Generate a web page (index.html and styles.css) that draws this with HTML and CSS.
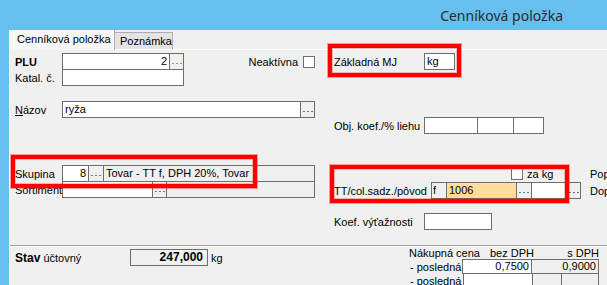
FILE: index.html
```html
<!DOCTYPE html>
<html lang="sk">
<head>
    <meta charset="UTF-8">
    <title>Cenníková položka</title>
    <link rel="stylesheet" href="styles.css">
</head>
<body>

    <div class="titlebar">Cenníková položka</div>

    <div class="client">
        <div class="tabs">
            <div class="tab active">Cenníková položka</div>
            <div class="tab">Poznámka</div>
            <div class="tab-fill"></div>
        </div>

        <div class="page">
            <div class="upper">
                <!-- left column -->
                <div class="col-left">
                    <div class="row row-plu">
                        <span class="lbl bold">PLU</span>
                        <div class="box w-plu">
                            <span class="cell val num">2</span>
                            <span class="cell btn orange"></span>
                        </div>
                        <span class="check-label">Neaktívna</span>
                        <span class="checkbox"></span>
                    </div>
                    <div class="row row-katal">
                        <span class="lbl">Katal. č.</span>
                        <div class="box w-plu"><span class="cell val"></span></div>
                    </div>
                    <div class="row row-nazov">
                        <span class="lbl"><u>N</u>ázov</span>
                        <div class="box w-long">
                            <span class="cell val">ryža</span>
                            <span class="cell btn"></span>
                        </div>
                    </div>
                    <div class="row row-skupina">
                        <span class="lbl">Skupina</span>
                        <div class="box w-long">
                            <span class="cell val num w-grp">8</span>
                            <span class="cell btn w-btn15"></span>
                            <span class="cell val ro">Tovar - TT f, DPH 20%, Tovar</span>
                        </div>
                    </div>
                    <div class="row row-sortiment">
                        <span class="lbl">Sortiment</span>
                        <div class="box w-long">
                            <span class="cell val w-sort"></span>
                            <span class="cell btn"></span>
                            <span class="cell val ro"></span>
                        </div>
                    </div>
                </div>

                <!-- right column -->
                <div class="col-right">
                    <div class="row row-mj">
                        <span class="lbl-r">Základná MJ</span>
                        <div class="box w-mj"><span class="cell val">kg</span></div>
                    </div>
                    <div class="row row-obj">
                        <span class="lbl-r">Obj. koef./% liehu</span>
                        <div class="box">
                            <span class="cell val w-obj1"></span>
                            <span class="cell val w-obj2"></span>
                            <span class="cell val w-obj3"></span>
                        </div>
                    </div>
                    <div class="row row-zakg">
                        <span class="checkbox"></span>
                        <span class="zakg">za kg</span>
                        <span class="cut">Pop</span>
                    </div>
                    <div class="row row-tt">
                        <span class="lbl-r w-tt">TT/col.sadz./pôvod</span>
                        <div class="box">
                            <span class="cell val ro w-f">f</span>
                            <span class="cell val hl w-code">1006</span>
                            <span class="cell btn dark w-btn15"></span>
                            <span class="cell val w-orig"></span>
                            <span class="cell btn dark"></span>
                        </div>
                        <span class="cut">Dop</span>
                    </div>
                    <div class="row row-koef">
                        <span class="lbl-r">Koef. výťažnosti</span>
                        <div class="box w-koef"><span class="cell val"></span></div>
                    </div>
                </div>
            </div>

            <div class="lower">
                <div class="stav-col">
                    <div class="row row-stav">
                        <span class="lbl-stav"><b class="big">Stav</b> účtovný</span>
                        <div class="box ro w-stav"><span class="cell val num big bold">247,000</span></div>
                        <span class="unit">kg</span>
                    </div>
                </div>
                <div class="price-col">
                    <div class="price-head">
                        <span class="ph-name">Nákupná cena</span>
                        <span class="ph-bez">bez DPH</span>
                        <span class="ph-s">s DPH</span>
                    </div>
                    <div class="price-row">
                        <span class="lbl-price">- posledná</span>
                        <div class="box short">
                            <span class="cell val num w-p1">0,7500</span>
                            <span class="cell val num ro w-p2">0,9000</span>
                        </div>
                    </div>
                    <div class="price-row second">
                        <span class="lbl-price">- posledná</span>
                        <div class="box short">
                            <span class="cell val w-p1"></span>
                            <span class="cell val ro w-p3"></span>
                            <span class="cell val ro w-p4"></span>
                        </div>
                    </div>
                </div>
            </div>
        </div>
    </div>

    <!-- red highlight frames -->
    <div class="mark mark-mj"></div>
    <div class="mark mark-grp"></div>
    <div class="mark mark-tt"></div>

</body>
</html>
```

FILE: styles.css
```css
* {
    box-sizing: border-box;
}
body {
    margin: 0;
    width: 607px;
    height: 285px;
    overflow: hidden;
    position: relative;
    background-color: #66bfef;
    font-family: "Liberation Sans", Arial, sans-serif;
    font-size: 11px;
    color: #000;
}
.bold {
    font-weight: bold;
}
.big {
    font-size: 12px;
}
.titlebar {
    height: 30px;
    display: flex;
    align-items: center;
    justify-content: flex-end;
    padding-right: 44px;
    font-family: "Noto Sans", sans-serif;
    font-size: 14px;
    color: #2b2b2b;
}
.client {
    margin-left: 9px;
    height: 255px;
    background-color: #f0f0f0;
    border-left: 1px solid #fafafa;
}

/* tabs */
.tabs {
    display: flex;
    align-items: flex-end;
    height: 20px;
}
.tab {
    height: 18px;
    line-height: 17px;
    padding-left: 5px;
    width: 58px;
    background-color: #e3e3e3;
    border: 1px solid #adadad;
    border-left: none;
    border-bottom-color: #fff;
}
.tab.active {
    height: 20px;
    line-height: 19px;
    width: 105px;
    padding-left: 7px;
    background-color: #f7f7f7;
    border: none;
    border-right: 1px solid #adadad;
}
.tab-fill {
    flex: 1;
    border-bottom: 1px solid #fff;
}

/* page */
.page {
    height: 235px;
    padding-left: 5px;
}
.upper {
    display: flex;
    height: 195px;
}
.col-left {
    width: 300px;
}
.col-right {
    flex: 1;
    margin-left: 14px;
}
.row {
    display: flex;
    align-items: center;
    height: 17px;
}
.lbl {
    width: 47px;
    white-space: nowrap;
}
.lbl-r {
    width: 90px;
    margin-left: 5px;
    white-space: nowrap;
}
.lbl-r.w-tt {
    width: 97px;
}
.row-plu { margin-top: 3px; }
.row-katal { margin-top: -1px; }
.row-nazov { margin-top: 15px; }
.row-skupina { margin-top: 47px; }
.row-sortiment { margin-top: -1px; }
.row-mj { margin-top: 3px; }
.row-obj { margin-top: 47px; }
.row-zakg { margin-top: 33px; height: 13px; }
.row-tt { margin-top: 2px; }
.row-koef { margin-top: 14px; }

/* fields */
.box {
    display: flex;
    height: 17px;
    border: 1px solid #6d6d6d;
    background-color: #fff;
}
.box.short {
    height: 15px;
}
.cell {
    height: 100%;
    line-height: 15px;
    white-space: nowrap;
    overflow: hidden;
}
.short .cell {
    line-height: 13px;
}
.cell + .cell {
    border-left: 1px solid #6d6d6d;
}
.val {
    flex: 1;
    padding: 0 2px;
}
.num {
    text-align: right;
}
.ro {
    background-color: #f0f0f0;
}
.hl {
    background-color: #fedc9c;
}
.btn {
    flex: none;
    width: 14px;
    background-color: #f0f0f0;
    display: flex;
    justify-content: center;
    align-items: center;
}
.btn::after {
    content: "";
    width: 10px;
    height: 1px;
    margin-top: 4px;
    background: repeating-linear-gradient(to right, #3a83d4 0 2px, transparent 2px 4px);
}
.btn.orange::after {
    background: repeating-linear-gradient(to right, #e0891c 0 2px, transparent 2px 4px);
}
.btn.dark::after {
    background: repeating-linear-gradient(to right, #5f7691 0 2px, transparent 2px 4px);
}
.w-btn15 { width: 15px; }
.w-plu { width: 122px; }
.w-long { width: 253px; }
.w-grp { flex: none; width: 25px; }
.w-sort { flex: none; width: 89px; }
.w-mj { width: 31px; }
.w-obj1 { flex: none; width: 52px; }
.w-obj2 { flex: none; width: 36px; }
.w-obj3 { flex: none; width: 30px; }
.w-f { flex: none; width: 14px; padding-left: 1px; }
.w-code { flex: none; width: 70px; }
.w-orig { flex: none; width: 35px; }
.w-koef { width: 68px; }

.check-label {
    margin-left: auto;
}
.checkbox {
    width: 12px;
    height: 12px;
    margin-left: 5px;
    border: 1px solid #707070;
    background-color: #fff;
}
.row-zakg .checkbox {
    margin-left: 182px;
}
.zakg {
    margin-left: 4px;
}
.cut {
    margin-left: auto;
    width: 17px;
    overflow: visible;
    white-space: nowrap;
}

/* lower part */
.lower {
    display: flex;
    margin-left: -5px;
    padding-left: 5px;
    height: 40px;
    border-top: 1px solid #a0a0a0;
    box-shadow: inset 0 1px #fff;
}
.stav-col {
    width: 394px;
}
.row-stav {
    margin-top: 3px;
}
.lbl-stav {
    width: 115px;
    white-space: nowrap;
}
.w-stav {
    width: 78px;
}
.w-stav .val {
    padding-right: 4px;
}
.unit {
    margin-left: 3px;
}
.price-col {
    width: 190px;
}
.price-head {
    display: flex;
    height: 12px;
    line-height: 12px;
    margin-top: 1px;
    white-space: nowrap;
}
.ph-name { width: 81px; }
.ph-bez { width: 43px; }
.ph-s { flex: 1; text-align: right; }
.price-row {
    display: flex;
    align-items: center;
    height: 15px;
}
.price-row.second {
    margin-top: -1px;
}
.lbl-price {
    width: 54px;
    padding-left: 1px;
    white-space: nowrap;
}
.price-row .box {
    width: 137px;
}
.w-p1 { flex: none; width: 68px; }
.w-p2 { flex: none; width: 67px; padding-right: 2px; }
.w-p3 { flex: none; width: 29px; }
.w-p4 { flex: 1; }

/* red highlight frames, drawn over the form */
.mark {
    position: absolute;
    border: 4px solid #ff0000;
    box-shadow: 0 0 0 1px rgba(255, 0, 0, 0.35), inset 0 0 0 1px rgba(255, 0, 0, 0.25);
}
.mark-mj {
    left: 328px;
    top: 44px;
    width: 133px;
    height: 33px;
}
.mark-grp {
    left: 11px;
    top: 155px;
    width: 246px;
    height: 33px;
}
.mark-tt {
    left: 330px;
    top: 165px;
    width: 239px;
    height: 38px;
}
```
